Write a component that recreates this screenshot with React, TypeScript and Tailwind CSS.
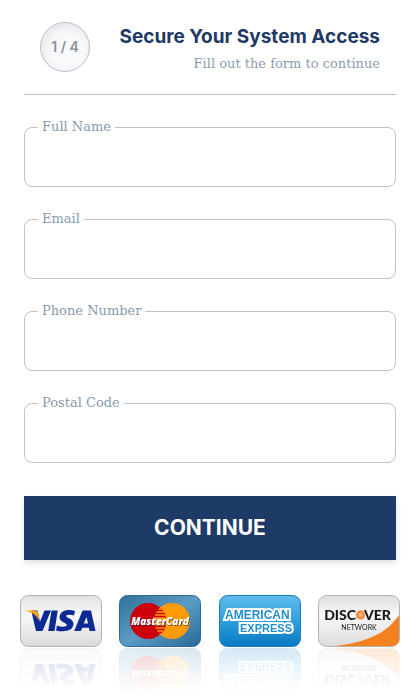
import React, { useState } from 'react';

const FIELDS = [
  { id: 'fullName', label: 'Full Name', type: 'text', autoComplete: 'name' },
  { id: 'email', label: 'Email', type: 'email', autoComplete: 'email' },
  { id: 'phone', label: 'Phone Number', type: 'tel', autoComplete: 'tel' },
  { id: 'postalCode', label: 'Postal Code', type: 'text', autoComplete: 'postal-code' },
];

interface CardProps {
  name: string;
  children: React.ReactNode;
}

// Card artwork on an 82x52 canvas, with a faded mirror image underneath
const Card: React.FC<CardProps> = ({ name, children }) => (
  <li className="w-[82px] [-webkit-box-reflect:below_1px_linear-gradient(to_top,rgba(0,0,0,0.18),transparent_85%)]">
    <svg viewBox="0 0 82 52" className="block w-full" role="img" aria-label={name}>
      {children}
    </svg>
  </li>
);

const Visa = () => (
  <Card name="Visa">
    <defs>
      <linearGradient id="visaBg" x1="0" y1="0" x2="0" y2="1">
        <stop offset="0" stopColor="#e2e2e2" />
        <stop offset="0.4" stopColor="#f8f8f8" />
        <stop offset="1" stopColor="#dadada" />
      </linearGradient>
    </defs>
    <rect x="0.5" y="0.5" width="81" height="51" rx="8" fill="url(#visaBg)" stroke="#b3b3b5" />
    <path d="M12 15.5h5.500l2.500 11 4.500-11h6.500L22.500 36h-6.500L12 19z" fill="#0b2a93" />
    <path d="M5 15.5h10c1.500 0 2.500.7 2.900 2.200l2.100 9.300C17.500 21.500 12.500 17 5 15.500z" fill="#f7a11b" />
    <path d="M31.500 15.500h6.300L34.500 36h-6.300z" fill="#0b2a93" />
    <path d="M55 15.900l-1 4.700c-3-1.200-7.800-1.300-7.800.5 0 2.200 7.300 2.600 7.300 7.700 0 7-9.500 8.800-17.500 6.600l1-4.900c3.600 1.700 9.800 1.700 9.800-.5 0-2.300-7.300-2.500-7.300-7.700 0-6.600 8.500-8.800 15.500-6.400z" fill="#0b2a93" />
    <path fillRule="evenodd" d="M64 15.500h7L75.500 36h-6l-.6-3.200h-6.500L60.700 36h-6.500l7.500-18.500c.5-1.400 1.200-2 2.300-2zm2.500 6.500L63.800 28.600h4.200z" fill="#0b2a93" />
  </Card>
);

const MasterCard = () => (
  <Card name="MasterCard">
    <defs>
      <linearGradient id="mcBg" x1="0" y1="0" x2="1" y2="1">
        <stop offset="0" stopColor="#2f7099" />
        <stop offset="0.5" stopColor="#5b9cc5" />
        <stop offset="1" stopColor="#286a96" />
      </linearGradient>
    </defs>
    <rect x="0.5" y="0.5" width="81" height="51" rx="8" fill="url(#mcBg)" stroke="#2d6b94" />
    <circle cx="53" cy="26" r="18" fill="#ff9a0a" />
    <circle cx="29" cy="26" r="18" fill="#cc0008" />
    <path d="M41 12.600c7.700 7 7.700 19.800 0 26.800-5-5-6-8-6-13.400s1-8.400 6-13.400z" fill="#ff9a0a" />
    <path d="M41 12.600c-4 4-6 8-6 13.400s2 9.400 6 13.400l-8-4V16.600z" fill="#cc0008" />
    <path d="M37 15.500h6.500M37 18.500h8.500M35 21.500h11.500M35 31.500h11.500M36 34.500h9.500M38 37.500h5" stroke="#cc0008" strokeWidth="1.400" />
    <g textAnchor="middle" fontFamily="Open Sans, sans-serif" fontSize="10" fontWeight="800" fontStyle="italic">
      <text x="42" y="31" fill="#17264f" fillOpacity="0.6">MasterCard</text>
      <text x="41" y="30" fill="#fff">MasterCard</text>
    </g>
  </Card>
);

const Amex = () => (
  <Card name="American Express">
    <defs>
      <linearGradient id="amexBg" x1="0" y1="0" x2="0" y2="1">
        <stop offset="0" stopColor="#60bdec" />
        <stop offset="0.5" stopColor="#309fdd" />
        <stop offset="1" stopColor="#0879c2" />
      </linearGradient>
    </defs>
    <rect x="0.5" y="0.5" width="81" height="51" rx="8" fill="url(#amexBg)" stroke="#1c7cba" />
    <g fontFamily="Liberation Sans, sans-serif" fontSize="12" fontWeight="700" fill="#1f8fd0" stroke="#fff" strokeWidth="4" strokeLinejoin="miter" paintOrder="stroke">
      <text x="6" y="24">AMERICAN</text>
      <text x="21" y="37" fontSize="11">EXPRESS</text>
    </g>
  </Card>
);

const Discover = () => (
  <Card name="Discover Network">
    <defs>
      <linearGradient id="discBg" x1="0" y1="0" x2="0" y2="1">
        <stop offset="0" stopColor="#dedede" />
        <stop offset="0.4" stopColor="#f8f8f8" />
        <stop offset="1" stopColor="#dcdcdc" />
      </linearGradient>
      <radialGradient id="discO">
        <stop offset="0" stopColor="#ffc18f" />
        <stop offset="1" stopColor="#f47621" />
      </radialGradient>
    </defs>
    <rect x="0.5" y="0.5" width="81" height="51" rx="8" fill="url(#discBg)" stroke="#b3b3b5" />
    <path d="M81 20v23.500c0 5-3 7.500-7.500 7.500H17C50 47 69 38 81 20z" fill="#f58020" />
    <g fontFamily="Lato, sans-serif" fill="#15171a">
      <text x="38" y="25" fontSize="14" fontWeight="900" textAnchor="end">DISC</text>
      <text x="46" y="25" fontSize="14" fontWeight="900">VER</text>
      <text x="41" y="35" fontSize="7" fontWeight="400" textAnchor="middle">NETWORK</text>
    </g>
    <circle cx="42.500" cy="20" r="4.500" fill="url(#discO)" />
  </Card>
);

const App: React.FC = () => {
  const [values, setValues] = useState<Record<string, string>>({});

  return (
    <main className="bg-white pb-12 font-['Inter',sans-serif]">
      <form className="px-6" onSubmit={(e) => e.preventDefault()}>
        <header className="flex items-start justify-between border-b border-[#c0c0c2] px-4 pt-[22px] pb-[18px]">
          <div className="flex size-[50px] items-center justify-center rounded-full border border-[#b9bdc8] bg-[#f7f9fa] text-sm font-semibold text-[#8e929b] shadow-[inset_2px_3px_8px_#e3e5e9]">
            1 / 4
          </div>
          <div className="text-right">
            <h1 className="text-[19px] leading-[30px] font-bold text-[#1e3a66]">Secure Your System Access</h1>
            <p className="font-['DejaVu_Serif',serif] text-[13px] leading-6 text-[#8e9db0]">
              Fill out the form to continue
            </p>
          </div>
        </header>

        <div className="mt-6 flex flex-col gap-6">
          {FIELDS.map((field) => (
            <fieldset key={field.id} className="rounded-lg border border-[#c3c3c4]">
              <legend className="ml-[13px] px-1 font-['DejaVu_Serif',serif] text-[13px] leading-4 text-[#8999b0]">
                <label htmlFor={field.id}>{field.label}</label>
              </legend>
              <input
                id={field.id}
                type={field.type}
                autoComplete={field.autoComplete}
                value={values[field.id] ?? ''}
                onChange={(e) => setValues({ ...values, [field.id]: e.target.value })}
                className="block h-[51px] w-full rounded-lg px-4 text-base text-[#1e3a66] outline-none"
              />
            </fieldset>
          ))}
        </div>

        <button
          type="submit"
          className="mt-[33px] h-16 w-full bg-[#1e3a66] text-[21px] font-bold text-white shadow-[0_3px_6px_rgba(0,0,0,0.12)]"
        >
          CONTINUE
        </button>
      </form>

      <ul className="mt-[35px] flex justify-between px-5">
        <Visa />
        <MasterCard />
        <Amex />
        <Discover />
      </ul>
    </main>
  );
};

export default App;
